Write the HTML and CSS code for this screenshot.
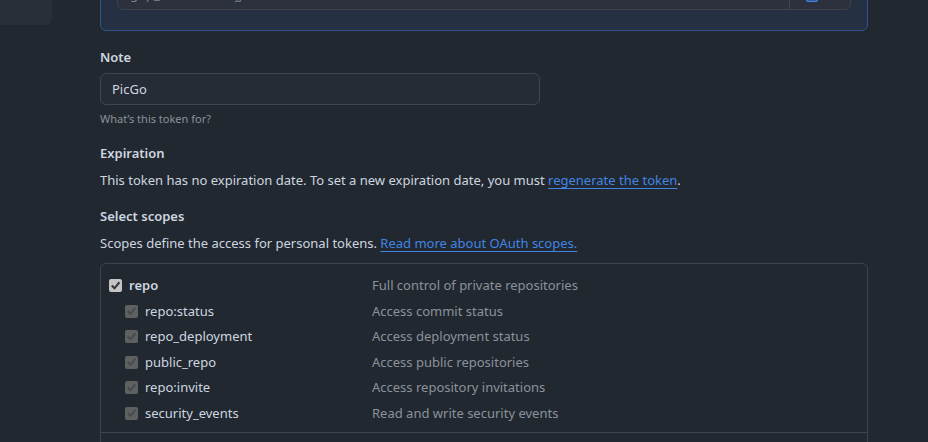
FILE: index.html
```html
<!DOCTYPE html>
<html lang="en">
<head>
<meta charset="utf-8">
<title>Edit personal access token</title>
<link rel="stylesheet" href="styles.css">
</head>
<body>
<div class="page">
  <nav class="sidebar" aria-label="Developer settings"></nav>
  <main class="content">
    <section class="flash">
      <div class="token">
        <input class="token-value" type="text" value="ghp_xxxxxxxxxxxjj" aria-label="Token" readonly>
        <button class="copy" type="button" aria-label="Copy token">
          <svg viewBox="0 0 16 16" width="16" height="16" fill="none" stroke="currentColor" stroke-width="1.5"><rect x="2.8" y="2.8" width="10.4" height="12.4" rx="1"/><rect x="5.5" y="1" width="5" height="3.5" rx="1"/></svg>
        </button>
      </div>
    </section>
    <form class="form">
      <div class="field">
        <label class="heading" for="note">Note</label>
        <input class="note" id="note" type="text" value="PicGo">
        <p class="hint">What’s this token for?</p>
      </div>
      <section class="block">
        <h2 class="heading">Expiration</h2>
        <p class="text">This token has no expiration date. To set a new expiration date, you must <a href="#regenerate">regenerate the token</a>.</p>
      </section>
      <section class="block">
        <h2 class="heading">Select scopes</h2>
        <p class="text">Scopes define the access for personal tokens. <a href="#scopes">Read more about OAuth scopes.</a></p>
      </section>
      <div class="scopes">
        <ul class="group">
          <li class="scope parent"><label class="name"><input type="checkbox" checked>repo</label><span class="about">Full control of private repositories</span></li>
          <li class="scope"><label class="name"><input type="checkbox" checked disabled>repo:status</label><span class="about">Access commit status</span></li>
          <li class="scope"><label class="name"><input type="checkbox" checked disabled>repo_deployment</label><span class="about">Access deployment status</span></li>
          <li class="scope"><label class="name"><input type="checkbox" checked disabled>public_repo</label><span class="about">Access public repositories</span></li>
          <li class="scope"><label class="name"><input type="checkbox" checked disabled>repo:invite</label><span class="about">Access repository invitations</span></li>
          <li class="scope"><label class="name"><input type="checkbox" checked disabled>security_events</label><span class="about">Read and write security events</span></li>
        </ul>
        <ul class="group"></ul>
      </div>
    </form>
  </main>
</div>
</body>
</html>
```
FILE: styles.css
```css
* {
  box-sizing: border-box;
}

body {
  margin: 0;
  background: #22282f;
  color: #cdd6e0;
  font-family: "Segoe UI", "Noto Sans", sans-serif;
  font-size: 13px;
  line-height: 21px;
}

input,
button {
  margin: 0;
  font: inherit;
  color: inherit;
}

h2,
p,
ul {
  margin: 0;
  padding: 0;
}

a {
  color: #4184e4;
  text-decoration: underline;
  text-underline-offset: 3px;
}

.page {
  display: grid;
  grid-template-columns: 52px minmax(0, 1fr);
  gap: 48px;
  height: 100vh;
  padding-right: 60px;
  align-items: start;
  overflow: hidden;
}

.sidebar {
  height: 25px;
  border-radius: 0 0 6px 0;
  background: #292f36;
}

.content {
  margin-top: -41px;
}

/* New token banner */
.flash {
  padding: 18px 16px 20px;
  border: 1px solid #2e5490;
  border-radius: 6px;
  background: #253142;
}

.token {
  display: flex;
  height: 32px;
  border: 1px solid #3d444d;
  border-radius: 6px;
  background: #2c313d;
}

.token-value {
  flex: 1;
  min-width: 0;
  padding: 0 12px;
  border: 0;
  background: none;
  color: #768390;
  outline: 0;
}

.copy {
  display: flex;
  align-items: center;
  justify-content: center;
  width: 61px;
  padding: 0 16px 0 0;
  border: 0;
  border-left: 1px solid #3d444d;
  background: none;
  color: #4184e4;
}

/* Form */
.form {
  display: flex;
  flex-direction: column;
  padding-top: 16px;
}

.field {
  display: flex;
  flex-direction: column;
  align-items: flex-start;
}

.heading {
  font-size: 13px;
  font-weight: 600;
  line-height: 21px;
}

.note {
  width: 440px;
  max-width: 100%;
  height: 32px;
  margin-top: 5px;
  padding: 0 11px;
  border: 1px solid #3f4650;
  border-radius: 6px;
  background: #262c35;
}

.hint {
  margin-top: 3px;
  color: #8a929c;
  font-size: 11px;
}

.block {
  margin-bottom: 15px;
}

.field + .block {
  margin-top: 14px;
}

.block .text {
  margin-top: 6px;
}

.scopes {
  margin-top: -6px;
  border: 1px solid #3d444d;
  border-radius: 6px;
}

.group {
  display: grid;
  grid-auto-rows: 1fr;
  height: 168px;
  padding: 9px 8px 6px;
  list-style: none;
}

.group + .group {
  height: auto;
  border-top: 1px solid #3d444d;
}

.scope {
  display: grid;
  grid-template-columns: 263px minmax(0, 1fr);
  align-items: center;
}

.name {
  display: flex;
  align-items: center;
  gap: 7px;
  padding-left: 16px;
}

.parent .name {
  padding-left: 0;
  font-weight: 600;
}

.about {
  color: #8a929c;
}

.name input {
  appearance: none;
  flex: none;
  width: 13px;
  height: 13px;
  border-radius: 2px;
  background: #c4c4c4;
}

.name input::before {
  content: "";
  display: block;
  height: 13px;
  background: #33373c;
  clip-path: polygon(15% 53%, 28% 42%, 42% 57%, 74% 18%, 86% 28%, 43% 81%);
}

.name input:disabled {
  background: #5f6060;
}

.name input:disabled::before {
  background: #494b4d;
}
```
